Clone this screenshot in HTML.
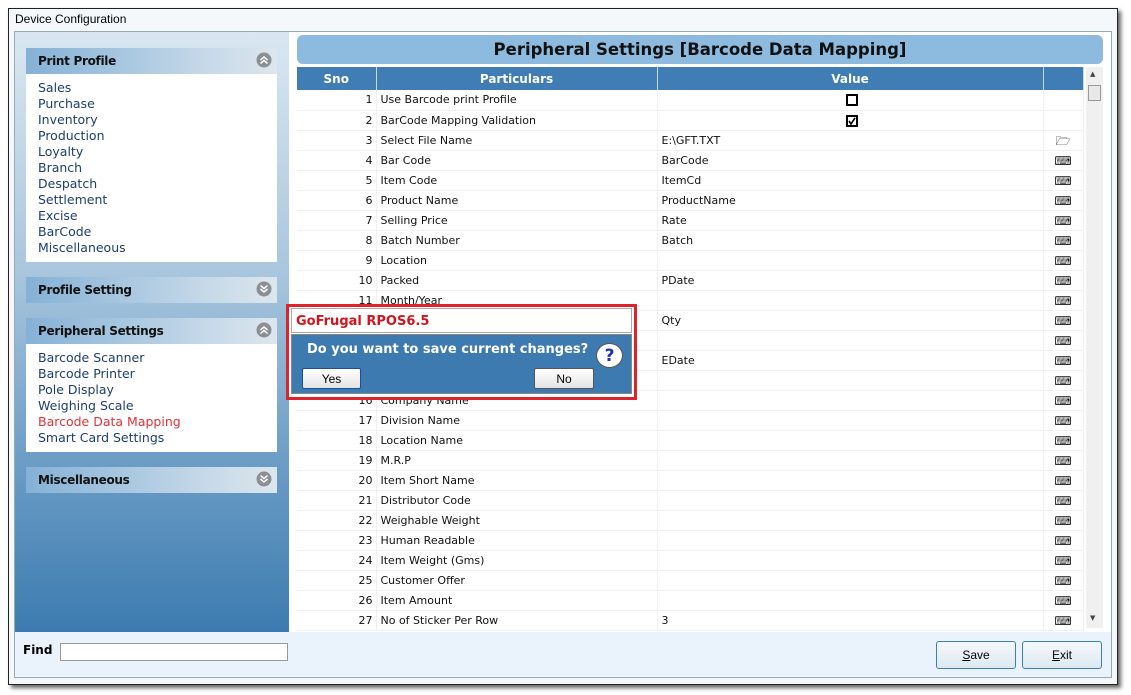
<!DOCTYPE html>
<html><head><meta charset="utf-8"><style>
*{margin:0;padding:0;box-sizing:border-box}
body{width:1131px;height:695px;background:#fff;position:relative;overflow:hidden;font-family:"DejaVu Sans","Liberation Sans",sans-serif}
.abs{position:absolute}
#win{left:8px;top:8px;width:1110px;height:677px;border:1px solid #222;background:#f4f8fb;box-shadow:3px 3px 4px #666}
#frame{left:14px;top:31px;width:1098px;height:647px;border:1px solid #9aa;background:#fff}
#side{left:15px;top:32px;width:274px;height:600px;background:linear-gradient(#dae7f1 0%,#a9c6de 40%,#6f9fc7 70%,#3c7bb0 100%)}
.ph{position:absolute;left:26px;width:251px;height:26px;background:linear-gradient(90deg,#85b1d6,#c4d8e8 70%,#dde6ec);font-weight:bold;font-size:12px;color:#111;padding:6px 0 0 12px;letter-spacing:-0.3px}
.ph svg{position:absolute;right:5px;top:4px}
.pb{position:absolute;left:26px;width:251px;background:#fff;padding:6px 0 0 12px;font-size:12.5px;line-height:16px;color:#1e3e6e}
#bot{left:15px;top:632px;width:1096px;height:45px;background:#eaf3fb}
.btn{position:absolute;top:641px;width:80px;height:28px;border:1px solid #3c7fb1;border-radius:3px;background:linear-gradient(#f5f9fc,#dce8f1);font-size:12px;text-align:center;line-height:27px;font-family:"Liberation Sans",sans-serif}
#title{left:297px;top:35px;width:806px;height:29px;background:#8dbadf;border-radius:6px;text-align:center;font-weight:bold;font-size:16.5px;line-height:29px;color:#111}
table{position:absolute;left:297px;top:67px;border-collapse:collapse;font-size:11px;width:786px;table-layout:fixed}
th{background:#3f7db4;color:#fff;height:23px;font-size:12px;border-right:1px solid #c8d8e6}
td{height:20px;line-height:19px;padding-top:0;padding-bottom:0;border-bottom:1px solid #eef1f4;border-right:1px solid #eef1f4;color:#111;white-space:nowrap;overflow:hidden}
td.n{text-align:right;padding-right:3px}
td.p,td.v{padding-left:4px}
td.i{text-align:center}
td.i span{display:inline-block;height:14px;line-height:14px;font-size:12px;overflow:hidden;vertical-align:middle}
.cb{display:inline-block;width:12px;height:12px;border:2px solid #000;vertical-align:middle;position:relative}
#sb{left:1086px;top:67px;width:17px;height:561px;background:#f0f0f0}
</style></head><body>
<div id="win" class="abs"></div>
<div class="abs" style="left:15px;top:12px;font-size:12px;font-family:'Liberation Sans',sans-serif">Device Configuration</div>
<div id="frame" class="abs"></div>
<div id="side" class="abs"></div>
<div class="ph" style="top:48px">Print Profile<svg width="16" height="16"><circle cx="8" cy="8" r="7.5" fill="#8b8f93"/><path d="M4.5 8 8 5 11.5 8M4.5 11.5 8 8.5 11.5 11.5" stroke="#fff" stroke-width="1.5" fill="none"/></svg></div>
<div class="pb" style="top:74px;height:188px">Sales<br>Purchase<br>Inventory<br>Production<br>Loyalty<br>Branch<br>Despatch<br>Settlement<br>Excise<br>BarCode<br>Miscellaneous</div>
<div class="ph" style="top:277px">Profile Setting<svg width="16" height="16"><circle cx="8" cy="8" r="7.5" fill="#8b8f93"/><path d="M4.5 4.5 8 7.5 11.5 4.5M4.5 8 8 11 11.5 8" stroke="#fff" stroke-width="1.5" fill="none"/></svg></div>
<div class="ph" style="top:318px">Peripheral Settings<svg width="16" height="16"><circle cx="8" cy="8" r="7.5" fill="#8b8f93"/><path d="M4.5 8 8 5 11.5 8M4.5 11.5 8 8.5 11.5 11.5" stroke="#fff" stroke-width="1.5" fill="none"/></svg></div>
<div class="pb" style="top:344px;height:108px">Barcode Scanner<br>Barcode Printer<br>Pole Display<br>Weighing Scale<br><span style="color:#e0323a">Barcode Data Mapping</span><br>Smart Card Settings</div>
<div class="ph" style="top:467px">Miscellaneous<svg width="16" height="16"><circle cx="8" cy="8" r="7.5" fill="#8b8f93"/><path d="M4.5 4.5 8 7.5 11.5 4.5M4.5 8 8 11 11.5 8" stroke="#fff" stroke-width="1.5" fill="none"/></svg></div>
<div id="bot" class="abs"></div>
<div class="abs" style="left:23px;top:643px;font-weight:bold;font-size:12px">Find</div>
<div class="abs" style="left:60px;top:643px;width:228px;height:18px;border:1px solid #999;background:#fff"></div>
<div class="btn" style="left:936px"><u>S</u>ave</div>
<div class="btn" style="left:1022px"><u>E</u>xit</div>
<div id="title" class="abs">Peripheral Settings [Barcode Data Mapping]</div>
<div id="sb" class="abs"><div style="position:absolute;left:2px;top:18px;width:13px;height:16px;border:1px solid #999;background:#e8e8e8"></div><div style="position:absolute;left:4px;top:3px;font-size:7px;color:#444">▲</div><div style="position:absolute;left:4px;top:547px;font-size:7px;color:#444">▼</div></div>
<table>
<colgroup><col style="width:79px"><col style="width:281px"><col style="width:386px"><col style="width:40px"></colgroup>
<tr><th>Sno</th><th>Particulars</th><th>Value</th><th></th></tr>
<tr><td class="n">1</td><td class="p">Use Barcode print Profile</td><td class="v" style="text-align:center"><span class="cb"></span></td><td></td></tr>
<tr><td class="n">2</td><td class="p">BarCode Mapping Validation</td><td class="v" style="text-align:center"><span class="cb"><svg width="8" height="8" style="position:absolute;left:0;top:0"><path d="M1 4 3 7 7 1" stroke="#000" stroke-width="1.6" fill="none"/></svg></span></td><td></td></tr>
<tr><td class="n">3</td><td class="p">Select File Name</td><td class="v">E:\GFT.TXT</td><td class="i"><span>🗁</span></td></tr>
<tr><td class="n">4</td><td class="p">Bar Code</td><td class="v">BarCode</td><td class="i"><span>⌨</span></td></tr>
<tr><td class="n">5</td><td class="p">Item Code</td><td class="v">ItemCd</td><td class="i"><span>⌨</span></td></tr>
<tr><td class="n">6</td><td class="p">Product Name</td><td class="v">ProductName</td><td class="i"><span>⌨</span></td></tr>
<tr><td class="n">7</td><td class="p">Selling Price</td><td class="v">Rate</td><td class="i"><span>⌨</span></td></tr>
<tr><td class="n">8</td><td class="p">Batch Number</td><td class="v">Batch</td><td class="i"><span>⌨</span></td></tr>
<tr><td class="n">9</td><td class="p">Location</td><td class="v"></td><td class="i"><span>⌨</span></td></tr>
<tr><td class="n">10</td><td class="p">Packed</td><td class="v">PDate</td><td class="i"><span>⌨</span></td></tr>
<tr><td class="n">11</td><td class="p">Month/Year</td><td class="v"></td><td class="i"><span>⌨</span></td></tr>
<tr><td class="n">12</td><td class="p">Quantity</td><td class="v">Qty</td><td class="i"><span>⌨</span></td></tr>
<tr><td class="n">13</td><td class="p">Expiry</td><td class="v"></td><td class="i"><span>⌨</span></td></tr>
<tr><td class="n">14</td><td class="p">Expiry Date</td><td class="v">EDate</td><td class="i"><span>⌨</span></td></tr>
<tr><td class="n">15</td><td class="p">Unit</td><td class="v"></td><td class="i"><span>⌨</span></td></tr>
<tr><td class="n">16</td><td class="p">Company Name</td><td class="v"></td><td class="i"><span>⌨</span></td></tr>
<tr><td class="n">17</td><td class="p">Division Name</td><td class="v"></td><td class="i"><span>⌨</span></td></tr>
<tr><td class="n">18</td><td class="p">Location Name</td><td class="v"></td><td class="i"><span>⌨</span></td></tr>
<tr><td class="n">19</td><td class="p">M.R.P</td><td class="v"></td><td class="i"><span>⌨</span></td></tr>
<tr><td class="n">20</td><td class="p">Item Short Name</td><td class="v"></td><td class="i"><span>⌨</span></td></tr>
<tr><td class="n">21</td><td class="p">Distributor Code</td><td class="v"></td><td class="i"><span>⌨</span></td></tr>
<tr><td class="n">22</td><td class="p">Weighable Weight</td><td class="v"></td><td class="i"><span>⌨</span></td></tr>
<tr><td class="n">23</td><td class="p">Human Readable</td><td class="v"></td><td class="i"><span>⌨</span></td></tr>
<tr><td class="n">24</td><td class="p">Item Weight (Gms)</td><td class="v"></td><td class="i"><span>⌨</span></td></tr>
<tr><td class="n">25</td><td class="p">Customer Offer</td><td class="v"></td><td class="i"><span>⌨</span></td></tr>
<tr><td class="n">26</td><td class="p">Item Amount</td><td class="v"></td><td class="i"><span>⌨</span></td></tr>
<tr><td class="n">27</td><td class="p">No of Sticker Per Row</td><td class="v">3</td><td class="i"><span>⌨</span></td></tr>
</table>
<div class="abs" style="left:286px;top:304px;width:351px;height:96px;border:3px solid #e0232b;background:#fff"></div>
<div class="abs" style="left:291px;top:308px;width:341px;height:25px;background:#fff;border:1px solid #aaa;color:#d4141c;font-weight:bold;font-size:13px;padding:5px 0 0 4px">GoFrugal RPOS6.5</div>
<div class="abs" style="left:291px;top:334px;width:341px;height:60px;background:#3d7ab0;border:1px solid #888"></div>
<div class="abs" style="left:307px;top:342px;color:#fff;font-weight:bold;font-size:13px">Do you want to save current changes?</div>
<div class="abs" style="left:596px;top:343px;width:27px;height:25px;border-radius:50%;background:#fff;border:1px solid #555;color:#1a2fc0;font-weight:bold;font-size:17px;text-align:center;line-height:24px">?</div>
<div class="abs" style="left:302px;top:368px;width:59px;height:21px;background:linear-gradient(#fff,#e4e4e4);border:1px solid #1e4f9c;border-radius:2px;font-size:12px;text-align:center;line-height:20px;font-family:'Liberation Sans',sans-serif">Yes</div>
<div class="abs" style="left:534px;top:368px;width:60px;height:21px;background:linear-gradient(#fff,#e4e4e4);border:1px solid #555;border-radius:2px;font-size:12px;text-align:center;line-height:20px;font-family:'Liberation Sans',sans-serif">No</div>
</body></html>
